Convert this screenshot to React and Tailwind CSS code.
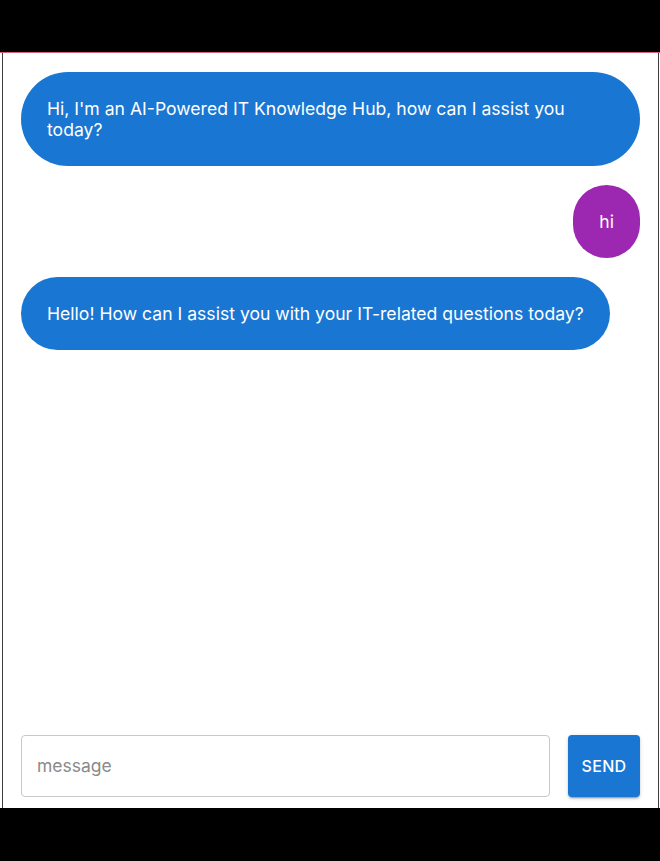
import React, { useState } from 'react';

const messages = [
  { id: 1, from: 'bot', text: "Hi, I'm an AI-Powered IT Knowledge Hub, how can I assist you today?" },
  { id: 2, from: 'user', text: 'hi' },
  { id: 3, from: 'bot', text: 'Hello! How can I assist you with your IT-related questions today?' },
];

const App = () => {
  const [draft, setDraft] = useState('');

  return (
    <div className="h-[861px] bg-black flex flex-col font-['Inter','Noto_Sans',sans-serif]">
      <div className="h-[52px] shrink-0" />

      {/* Chat panel */}
      <div className="h-[756px] shrink-0 bg-white border-t border-[#d8607c] flex">
        <div className="ml-[2px] mr-px flex-1 border-x border-[#3c3c3c] flex flex-col px-[18px] pt-[19px] pb-[11px]">
          <div className="flex-1 flex flex-col gap-[19px]">
            {messages.map((m) => (
              <div
                key={m.id}
                className={`w-fit max-w-full rounded-full px-[26px] py-[26px] text-[17.6px] leading-[21px] text-white ${
                  m.from === 'user' ? 'self-end bg-[#9c27b0]' : 'self-start bg-[#1976d2]'
                }`}
              >
                {m.text}
              </div>
            ))}
          </div>

          {/* Composer */}
          <div className="flex items-stretch gap-[18px] h-[62px]">
            <input
              value={draft}
              onChange={(e) => setDraft(e.target.value)}
              placeholder="message"
              className="flex-1 min-w-0 rounded-[4px] border border-[#c8c8c8] px-[15px] text-[17.5px] text-gray-900 placeholder:text-[#8a8a8a] outline-none"
            />
            <button className="w-[72px] rounded-[4px] bg-[#1976d2] text-white text-[16px] font-medium tracking-[0.3px] shadow-[0_3px_1px_-2px_rgba(0,0,0,0.2),0_2px_2px_0_rgba(0,0,0,0.14),0_1px_5px_0_rgba(0,0,0,0.12)]">
              SEND
            </button>
          </div>
        </div>
      </div>

      <div className="flex-1" />
    </div>
  );
};

export default App;
